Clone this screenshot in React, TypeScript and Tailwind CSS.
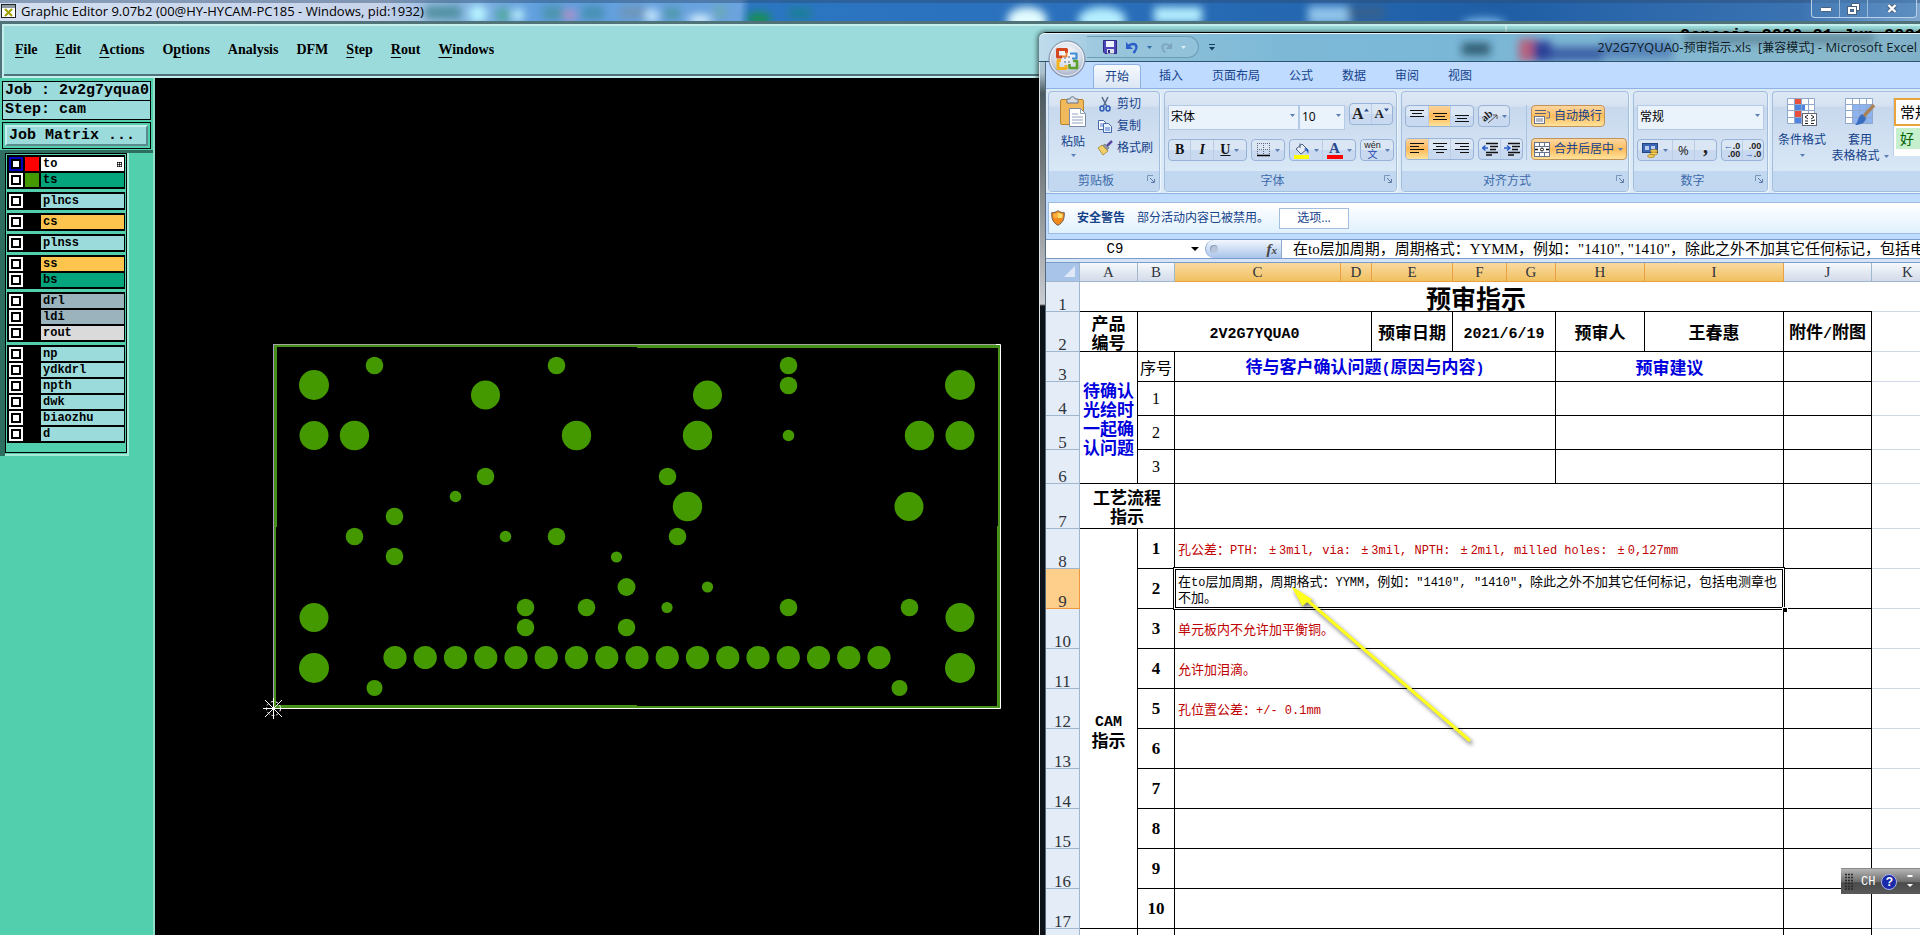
import React from 'react';
import clsx from 'clsx';

const CJK_UI = 'font-["Open_Sans","Noto_Sans_CJK_SC",sans-serif]';
const CJK_CELL = 'font-["Noto_Sans_CJK_SC",sans-serif]';
const MONO = 'font-["Liberation_Mono",monospace]';
const SERIF = 'font-["Liberation_Serif","Noto_Sans_CJK_SC",serif]';

/* ---------- Graphic Editor data ---------- */

// [before, underlined letter, after]
const menus: [string, string, string][] = [
  ['', 'F', 'ile'],
  ['', 'E', 'dit'],
  ['', 'A', 'ctions'],
  ['O', 'p', 'tions'],
  ['Analysis', '', ''],
  ['DFM', '', ''],
  ['', 'S', 'tep'],
  ['', 'R', 'out'],
  ['', 'W', 'indows'],
];

interface Layer {
  name: string;
  bg: string;
  color?: string;
  active?: boolean;
}

const layerGroups: Layer[][] = [
  [
    { name: 'to', bg: 'bg-white', color: 'bg-[#ff0000]', active: true },
    { name: 'ts', bg: 'bg-[#04a47c]', color: 'bg-[#459900]' },
  ],
  [{ name: 'plncs', bg: 'bg-[#9bdbdb]' }],
  [{ name: 'cs', bg: 'bg-[#fdc54e]' }],
  [{ name: 'plnss', bg: 'bg-[#9bdbdb]' }],
  [
    { name: 'ss', bg: 'bg-[#fdc54e]' },
    { name: 'bs', bg: 'bg-[#04a47c]' },
  ],
  [
    { name: 'drl', bg: 'bg-[#9bb3bc]' },
    { name: 'ldi', bg: 'bg-[#9bb3bc]' },
    { name: 'rout', bg: 'bg-[#dadada]' },
  ],
  [
    { name: 'np', bg: 'bg-[#9bdbdb]' },
    { name: 'ydkdrl', bg: 'bg-[#9bdbdb]' },
    { name: 'npth', bg: 'bg-[#9bdbdb]' },
    { name: 'dwk', bg: 'bg-[#9bdbdb]' },
    { name: 'biaozhu', bg: 'bg-[#9bdbdb]' },
    { name: 'd', bg: 'bg-[#9bdbdb]' },
  ],
];

// [cx, cy, r]
const pads: [number, number, number][] = [
  [314, 385, 15], [960, 385, 15], [314, 668, 15], [960, 668, 15],
  [314, 435.5, 14.5], [354.5, 435.5, 14.7], [576.5, 435.5, 14.7], [697.5, 435.5, 14.7],
  [919.5, 435.5, 14.7], [960, 435.5, 14.5], [485.5, 395, 14.5], [707.5, 395, 14.5],
  [687.5, 506.5, 14.7], [909, 506.5, 14.5], [314, 617.5, 14.5], [960, 617.5, 14.5],
  [374.5, 365.5, 8.8], [556.5, 365.5, 8.8], [788.5, 365.5, 8.8], [788.5, 385.5, 8.8],
  [485.5, 476.5, 8.8], [667.5, 476.5, 8.8], [394.5, 516.5, 8.8], [354.5, 536.5, 8.8],
  [394.5, 556.5, 8.8], [556.5, 536.5, 8.8], [677.5, 536.5, 8.8], [626.5, 587, 9],
  [525.5, 607.5, 8.8], [586.5, 607.5, 8.8], [788.5, 607.5, 8.8], [909.5, 607.5, 8.8],
  [525.5, 627.5, 8.8], [626.5, 627.5, 8.8], [374.5, 688, 8], [899.5, 688, 8],
  [455.5, 496.5, 5.8], [505.5, 536.5, 5.8], [616.5, 557, 5.6], [788.5, 435.5, 5.8],
  [707.5, 587, 5.6], [667, 607.5, 5.6],
];

const pins = Array.from({ length: 17 }, (_, i) => 395 + i * 30.25);

/* ---------- Shared bits ---------- */

const Caret = ({ className = 'text-[#5a7fb5]' }: { className?: string }) => (
  <svg width="5" height="3" viewBox="0 0 5 3" className={clsx('shrink-0', className)}>
    <path d="M0 0h5L2.5 3z" fill="currentColor" />
  </svg>
);

// Half-width runs get their own face and size, next to full-width Chinese
const Mixed = ({ text, latin, face = MONO }: { text: string; latin: string; face?: string }) => (
  <>
    {text.split(/([\x20-\x7e]+|±)/).map((run, i) => {
      if (i % 2 === 0) return run;
      return (
        <span key={i} className={clsx(face, latin, run === '±' && 'inline-block w-[13px] text-center')}>
          {run}
        </span>
      );
    })}
  </>
);

/* ---------- Graphic Editor ---------- */

const EditorTitle = () => (
  <header className="relative flex h-[21px] shrink-0 items-center overflow-hidden bg-[linear-gradient(90deg,#d3dff0_0px,#c6d3ea_380px,#8db8e2_450px,#5f9ede_540px,#6ba3de_740px,#2c76c2_750px,#2a6fbb_1100px,#1f5ea5_1500px,#3b73b2_1800px,#7ca6cf_1920px)]">
    <svg className="absolute left-0 top-0 h-full w-full" aria-hidden="true">
      <defs>
        <filter id="soft" x="-50%" y="-100%" width="200%" height="300%">
          <feGaussianBlur stdDeviation="4" />
        </filter>
      </defs>
      <g filter="url(#soft)">
        <rect x="425" y="6" width="36" height="13" fill="#4f8fa0" />
        <circle cx="478" cy="14" r="9" fill="#b5f4ff" />
        <circle cx="503" cy="15" r="7" fill="#4fa89b" />
        <circle cx="518" cy="15" r="6" fill="#bff6ff" />
        <rect x="543" y="6" width="20" height="14" fill="#4b94ae" />
        <circle cx="570" cy="15" r="6" fill="#b88fc4" />
        <rect x="582" y="6" width="22" height="14" fill="#4690b3" />
        <rect x="620" y="6" width="26" height="13" fill="#6d96bb" />
        <circle cx="652" cy="16" r="7" fill="#c6e6ff" />
        <rect x="664" y="8" width="16" height="11" fill="#4d98a8" />
        <ellipse cx="700" cy="20" rx="12" ry="5" fill="#ddf4ff" />
        <rect x="714" y="6" width="12" height="12" fill="#69a9b5" />
        <ellipse cx="759" cy="19" rx="12" ry="7" fill="#148f52" />
        <rect x="789" y="8" width="22" height="11" fill="#1d7f96" />
        <ellipse cx="1027" cy="20" rx="20" ry="13" fill="#e2fcff" />
        <ellipse cx="1102" cy="20" rx="24" ry="13" fill="#b3edff" />
        <rect x="1154" y="7" width="48" height="16" fill="#b3edff" />
        <rect x="1308" y="6" width="42" height="18" fill="#8fc3ea" />
        <rect x="1348" y="6" width="36" height="13" fill="#35618f" />
        <ellipse cx="1484" cy="24" rx="22" ry="6" fill="#7fbdec" />
      </g>
      <rect width="100%" height="3" fill="#2d4b70" opacity="0.45" />
    </svg>
    <svg width="15" height="14" viewBox="0 0 15 14" className="relative ml-px shrink-0">
      <rect x="0.5" y="0.5" width="14" height="13" fill="#fff" stroke="#222" />
      <rect x="1" y="1" width="13" height="3" fill="#8d98a5" />
      <path d="M4 5l7 7M11 5l-7 7" stroke="#a0a000" strokeWidth="2" />
    </svg>
    <h1 className={clsx('relative ml-[5px] whitespace-nowrap text-[13px] leading-5 text-black', CJK_UI)}>
      Graphic Editor 9.07b2 (00@HY-HYCAM-PC185 - Windows, pid:1932)
    </h1>
    <div className="absolute right-[3px] top-0 flex h-[18px] overflow-hidden rounded-b border border-t-0 border-[#b9d0e8] bg-[#4a7fb8]/60">
      <button aria-label="Minimize" className="flex w-7 items-center justify-center border-r border-[#9dbbd9]">
        <svg width="12" height="6" viewBox="0 0 12 6"><rect x="0.5" y="1.5" width="11" height="4" rx="1" fill="#fff" stroke="#48607c" /></svg>
      </button>
      <button aria-label="Restore" className="flex w-7 items-center justify-center border-r border-[#9dbbd9]">
        <svg width="13" height="12" viewBox="0 0 13 12">
          <path d="M4.5 3.5v-3h8v7h-3" fill="#fff" stroke="#48607c" />
          <rect x="0.5" y="3.5" width="9" height="8" fill="#fff" stroke="#48607c" />
          <rect x="3.5" y="6.5" width="3" height="2" fill="#4a7fb8" stroke="#48607c" />
        </svg>
      </button>
      <button aria-label="Close" className="flex w-12 items-center justify-center">
        <svg width="12" height="11" viewBox="0 0 12 11">
          <path d="M2.5 2l7 7M9.5 2l-7 7" stroke="#48607c" strokeWidth="4" />
          <path d="M2.5 2l7 7M9.5 2l-7 7" stroke="#fff" strokeWidth="2.4" />
        </svg>
      </button>
    </div>
  </header>
);

const EditorMenu = () => (
  <div className="flex h-[57px] shrink-0 border-t-[3px] border-[#4f7378] bg-[#4f7378] pl-0.5">
    <nav className="flex flex-1 items-center gap-[18px] overflow-hidden border-y-2 border-l-2 border-[#c4efed] bg-[#9bdbdb] pb-0.5 pl-[11px] shadow-[inset_0_-2px_0_#4f7378]">
      {menus.map(([pre, key, post]) => (
        <button key={pre + key + post} className={clsx('text-[14px] font-bold leading-5 text-black', SERIF)}>
          {pre}
          {key && <span className="underline underline-offset-[3px]">{key}</span>}
          {post}
        </button>
      ))}
    </nav>
    <div className="w-[415px] shrink-0 overflow-hidden border-l-2 border-t-2 border-[#c4efed] bg-[#9bdbdb] pl-[173px]">
      <p className={clsx('whitespace-nowrap text-[17px] font-bold leading-5 text-black', MONO)}>Genesis 2000 21 Jun 2021</p>
    </div>
  </div>
);

const LayerRow = ({ layer }: { layer: Layer }) => (
  <div className="flex h-4 items-center gap-0.5 pl-0.5 pr-px">
    <input
      type="checkbox"
      id={`layer-${layer.name}`}
      className={clsx(
        'm-0 h-[14px] w-[14px] shrink-0 appearance-none border-2 bg-white shadow-[inset_0_0_0_2px_#000]',
        layer.active ? 'border-[#0000b8]' : 'border-white'
      )}
    />
    <span className={clsx('h-[14px] w-[14px] shrink-0', layer.color)} />
    <label
      htmlFor={`layer-${layer.name}`}
      className={clsx('flex h-[14px] flex-1 items-center justify-between pl-0.5 pr-0.5 text-[12px] font-bold leading-[14px] text-black', MONO, layer.bg)}
    >
      {layer.name}
      {layer.active && (
        <svg width="5" height="5" viewBox="0 0 5 5">
          <path d="M0 .5h5M0 2.5h5M0 4.5h5M.5 0v5M2.5 0v5M4.5 0v5" stroke="#000" strokeWidth="0.7" />
        </svg>
      )}
    </label>
  </div>
);

const LayerPanel = () => (
  <aside className="flex w-[155px] shrink-0 flex-col border-r-2 border-[#8fe0c8] bg-[#52d0ae] pt-[3px]">
    <div className="px-0.5">
      <div className={clsx('whitespace-nowrap border border-black bg-[#9bdbdb] text-[15px] font-bold leading-[18px] text-black', MONO)}>
        <p className="border-b border-black pl-0.5">Job : 2v2g7yqua0</p>
        <p className="pl-0.5">Step: cam</p>
      </div>
      <div className="mt-0.5 border border-black p-0.5">
        <button className={clsx('block h-[21px] w-full border-2 border-b-[#5a8a8e] border-l-[#c4efed] border-r-[#5a8a8e] border-t-[#c4efed] bg-[#9bdbdb] pl-0.5 text-left text-[15px] font-bold leading-[17px] text-black', MONO)}>
          Job Matrix ...
        </button>
      </div>
    </div>
    <div className="mt-px border-l-[5px] border-t-[3px] border-[#2e6e60]">
      <div className="mr-6 border-b-2 border-r-2 border-[#a5ead6] pb-px">
        <div className="border border-black p-px pb-[9px]">
          <div className="flex flex-col gap-[3px]">
            {layerGroups.map((group) => (
              <div key={group[0].name} className="bg-black py-px">
                {group.map((layer) => (
                  <LayerRow key={layer.name} layer={layer} />
                ))}
              </div>
            ))}
          </div>
        </div>
      </div>
    </div>
  </aside>
);

const BoardView = () => (
  <main className="flex-1 overflow-hidden bg-black">
    <svg width="885" height="857" viewBox="155 78 885 857" className="block max-w-none">
      {/* board outline */}
      <g fill="#47901a">
        <path d="M274 345h3v182h-1v181h-2z" />
        <path d="M274 345h726v3H637v-1H274z" />
        <path d="M998 345h2v363h-3V526h1z" />
        <path d="M274 705h363v1h363v2H274z" />
      </g>
      <path d="M274 344.5h726" stroke="#a3a79c" />
      <path d="M273.5 344v364" stroke="#a896c4" />
      <path d="M996 344.5h4.5V708.5H274" fill="none" stroke="#fff" />
      <g fill="#459900">
        {pads.map(([x, y, r]) => (
          <circle key={`${x}-${y}`} cx={x} cy={y} r={r} />
        ))}
        {pins.map((x) => (
          <circle key={x} cx={x} cy={657.5} r={11.6} />
        ))}
      </g>
      {/* datum */}
      <g stroke="#fff" fill="none">
        <path d="M263 708.5h21M273.5 698v21M265 700l17 17M282 700l-17 17" />
        <circle cx="273.5" cy="708.5" r="7" strokeDasharray="3 2" />
      </g>
    </svg>
  </main>
);

/* ---------- Excel ribbon ---------- */

const OfficeLogo = () => (
  <svg width="38" height="38" viewBox="0 0 38 38">
    <defs>
      <radialGradient id="orb" cx="50%" cy="35%" r="65%">
        <stop offset="0" stopColor="#fff" />
        <stop offset="0.6" stopColor="#d5dce8" />
        <stop offset="1" stopColor="#9fabc2" />
      </radialGradient>
    </defs>
    <circle cx="19" cy="19" r="18" fill="url(#orb)" stroke="#7f8fa8" />
    <circle cx="19" cy="19" r="16.5" fill="none" stroke="#fff" opacity="0.8" />
    <g fill="none" strokeWidth="3" strokeLinejoin="round">
      <path d="M14 17H9.500V9.500h9V13" stroke="#d2451e" />
      <path d="M22 13.500h6.500V18.500H24" stroke="#3f8fd6" strokeWidth="2.200" />
      <path d="M13 20.500h-3v8h8V25" stroke="#f3b21b" />
      <path d="M25 21h4v7h-7.500v-4" stroke="#5da02c" strokeWidth="2.600" />
      <path d="M14 16.500h4.500V12" stroke="#ef7f34" strokeWidth="1.800" />
    </g>
    <path d="M16 21h2v2h-2zM20 21h2v2h-2zM20 16h2v2h-2zM16 17h2v2h-2z" fill="#9ab" />
  </svg>
);

const ExcelTitle = () => (
  <header className="relative flex h-[29px] shrink-0 items-center overflow-hidden rounded-tl-md border-b border-[#31536b] bg-[linear-gradient(90deg,#c0dcec_0px,#8fc0d8_90px,#7db9d7_240px,#7ab6d6_440px,#8ab9cc_800px,#7fb0c8_100%)] pl-12 shadow-[inset_0_1px_0_#e9f6fb]">
    <svg className="absolute left-0 top-0 h-full w-full" aria-hidden="true">
      <g filter="url(#soft)">
        <rect x="423" y="10" width="28" height="12" fill="#1d4358" opacity="0.8" />
        <rect x="480" y="6" width="18" height="22" fill="#b7607d" />
        <rect x="494" y="8" width="18" height="20" fill="#2a3f97" />
        <rect x="510" y="14" width="54" height="14" fill="#2a4a9b" opacity="0.8" />
        <rect x="562" y="8" width="72" height="18" fill="#3b66ac" opacity="0.6" />
        <rect x="645" y="2" width="190" height="8" fill="#3a5f70" opacity="0.6" />
      </g>
    </svg>
    <div className="relative flex h-[22px] items-center gap-2 rounded-r-full border border-l-0 border-[#6f9cb5] bg-[#9cc8de]/50 pl-4 pr-3">
      <button aria-label="保存">
        <svg width="14" height="14" viewBox="0 0 14 14">
          <path d="M.5.500h13v13H2l-1.500-1.500z" fill="#4a46b8" stroke="#2d2a80" />
          <rect x="3" y="1" width="8" height="6" fill="#eef2fb" />
          <rect x="4" y="9" width="7" height="4.500" fill="#dfe3ee" />
          <rect x="5" y="10" width="2" height="3" fill="#2d2a80" />
        </svg>
      </button>
      <button aria-label="撤消" className="flex items-center gap-2">
        <svg width="14" height="13" viewBox="0 0 14 13">
          <path d="M3 5.500C6 2 11 2 11.500 6c.3 2.500-1.500 4-3 6" fill="none" stroke="#2c5fc9" strokeWidth="2.400" />
          <path d="M1 1v7h7z" fill="#2c5fc9" />
        </svg>
        <Caret className="text-[#2f6ba5]" />
      </button>
      <button aria-label="恢复" className="flex items-center gap-2" disabled>
        <svg width="13" height="13" viewBox="0 0 14 13">
          <path d="M11 5.500C8 2 3 2 2.500 6 2.200 8.500 4 10 5.500 12" fill="none" stroke="#7da5bd" strokeWidth="2" />
          <path d="M13 1v7H6z" fill="#7da5bd" />
        </svg>
        <Caret className="text-[#d8ecf5]" />
      </button>
    </div>
    <button aria-label="自定义快速访问工具栏" className="relative ml-2.5">
      <svg width="6" height="7" viewBox="0 0 6 7"><path d="M0 .500h6" stroke="#14405f" /><path d="M0 3h6L3 6.500z" fill="#14405f" /></svg>
    </button>
    <h2 className="relative ml-auto whitespace-pre pr-[3px] text-[12px] leading-5 text-[#0d1b26]">
      <Mixed text="2V2G7YQUA0-预审指示.xls  [兼容模式] - Microsoft Excel" face={CJK_UI} latin="text-[13px]" />
    </h2>
  </header>
);

const tabs = ['开始', '插入', '页面布局', '公式', '数据', '审阅', '视图'];

const RibbonTabs = () => (
  <nav className="flex h-[26px] shrink-0 items-end gap-[7px] bg-[#bfdbff] pl-[47px]">
    {tabs.map((tab, i) => (
      <button
        key={tab}
        className={clsx(
          'h-6 px-[11px] text-[12px] leading-6 text-[#15428b]',
          i === 0 && 'rounded-t border border-b-0 border-[#8db2e3] bg-gradient-to-b from-[#f6fafe] to-[#dbe6f4]'
        )}
      >
        {tab}
      </button>
    ))}
  </nav>
);

interface GroupProps {
  title: string;
  className: string;
  launcher?: boolean;
  children: React.ReactNode;
}

const RibbonGroup: React.FC<GroupProps> = ({ title, className, launcher = true, children }) => (
  <section className={clsx('flex h-[101px] flex-col overflow-hidden rounded border border-[#a3bddd] bg-[linear-gradient(180deg,#dde8f5_0px,#d6e2f1_14px,#c8d8ed_15px,#d9e8f6_80px)] shadow-[1px_1px_0_#eef6fd]', className)}>
    <div className="flex-1">{children}</div>
    <div className="relative flex h-5 items-center justify-center bg-[#c1d8f0] pr-4 text-[12px] leading-5 text-[#3e6aaa]">
      {title}
      {launcher && (
        <button aria-label={`${title}选项`} className="absolute right-1 top-1">
          <svg width="8" height="8" viewBox="0 0 8 8">
            <path d="M.5 6V.500H6" fill="none" stroke="#7a96bd" />
            <path d="M3 3l4 4M7.500 4v3.500H4" fill="none" stroke="#5d7ca8" />
          </svg>
        </button>
      )}
    </div>
  </section>
);

const BtnBar = ({ children, className }: { children: React.ReactNode; className?: string }) => (
  <div className={clsx('flex h-[22px] shrink-0 divide-x divide-[#b9cde6] overflow-hidden rounded-sm border border-[#97b3d8] bg-[linear-gradient(180deg,#dbe6f4_50%,#c9d9ef_50%)]', className)}>
    {children}
  </div>
);

const Btn = ({ label, on, children, className }: { label: string; on?: boolean; children: React.ReactNode; className?: string }) => (
  <button
    aria-label={label}
    className={clsx('flex flex-1 items-center justify-center gap-1', on && 'bg-gradient-to-b from-[#fbd39a] via-[#fdb855] to-[#fee39a]', className)}
  >
    {children}
  </button>
);

const Lines = ({ rows }: { rows: [number, number, number][] }) => (
  <svg width="16" height="14" viewBox="0 0 16 14">
    {rows.map(([x, y, w], i) => (
      <path key={i} d={`M${x} ${y + 0.5}h${w}`} stroke="#111" strokeWidth="1.2" />
    ))}
  </svg>
);

const Combo = ({ label, value, className }: { label: string; value: string; className: string }) => (
  <div className={clsx('relative h-[25px] shrink-0', className)}>
    <select aria-label={label} defaultValue={value} className="h-full w-full appearance-none border border-[#b3cae8] bg-[#eaf2fb] pl-0.5 text-[12px] leading-5 text-black">
      <option>{value}</option>
    </select>
    <span className="pointer-events-none absolute right-1 top-[11px]"><Caret /></span>
  </div>
);

const ClipboardGroup = () => (
  <RibbonGroup title="剪贴板" className="w-28">
    <div className="flex gap-2 pl-2 pt-1 text-[12px] leading-4 text-[#15428b]">
      <button className="flex w-8 flex-col items-center">
        <svg width="28" height="32" viewBox="0 0 28 32">
          <rect x="1.500" y="3.500" width="23" height="25" rx="1.500" fill="#f0b95c" stroke="#b98430" />
          <path d="M8 3h3c0-3 5-3 5 0h3v4H8z" fill="#d6dbe3" stroke="#6d7684" />
          <path d="M10.500 12.500h11l5 5v13h-16z" fill="#fff" stroke="#7a8ba5" />
          <path d="M21.500 12.500v5h5M13 18h6M13 21h11M13 24h11M13 27h11" fill="none" stroke="#8fa3bf" />
        </svg>
        <span className="mt-1.5 whitespace-nowrap">粘贴</span>
        <span className="mt-1"><Caret /></span>
      </button>
      <div className="flex flex-col gap-1.5 whitespace-nowrap">
        <button className="flex items-center gap-1">
          <svg width="16" height="16" viewBox="0 0 16 16">
            <path d="M5 1l4.500 9M11 1L6.500 10" stroke="#5c6f90" strokeWidth="1.600" />
            <ellipse cx="5" cy="12.500" rx="2" ry="2.500" fill="none" stroke="#2e5cb8" strokeWidth="1.500" />
            <ellipse cx="11" cy="12.500" rx="2" ry="2.500" fill="none" stroke="#2e5cb8" strokeWidth="1.500" />
          </svg>
          剪切
        </button>
        <button className="flex items-center gap-1">
          <svg width="16" height="16" viewBox="0 0 16 16">
            <path d="M1.500 2.500h5l3 3v6h-8z" fill="#fff" stroke="#4768a8" />
            <path d="M6.500 5.500h5l3 3v6h-8z" fill="#e6effc" stroke="#4768a8" />
            <path d="M8 10h5M8 12h5M3 6h3M3 8h3" stroke="#4b7ad0" />
          </svg>
          复制
        </button>
        <button className="flex items-center gap-1">
          <svg width="16" height="16" viewBox="0 0 16 16">
            <path d="M15 1l-5 5" stroke="#5a4aa0" strokeWidth="2.500" />
            <path d="M8 4l4 4-2 2-5-4z" fill="#8d96ab" stroke="#555" strokeWidth="0.500" />
            <path d="M5 5l6 6-5 4-5-7z" fill="#f2d069" stroke="#9a7a22" strokeWidth="0.700" />
          </svg>
          格式刷
        </button>
      </div>
    </div>
  </RibbonGroup>
);

const FontGroup = () => (
  <RibbonGroup title="字体" className="w-[233px]">
    <div className="flex flex-col gap-[11px] px-[3px] pt-[11px]">
      <div className="flex">
        <Combo label="字体" value="宋体" className="w-[131px]" />
        <Combo label="字号" value="10" className="w-[46px]" />
        <BtnBar className="ml-1 flex-1">
          <Btn label="增大字号" className={SERIF}>
            <span className="flex text-[16px] font-bold leading-5 text-[#222]">A<svg width="5" height="4" viewBox="0 0 5 3" className="mt-1"><path d="M0 3h5L2.500 0z" fill="#2c4f94" /></svg></span>
          </Btn>
          <Btn label="减小字号" className={SERIF}>
            <span className="flex text-[13px] font-bold leading-5 text-[#222]">A<svg width="5" height="4" viewBox="0 0 5 3" className="mt-1"><path d="M0 0h5L2.500 3z" fill="#2c4f94" /></svg></span>
          </Btn>
        </BtnBar>
      </div>
      <div className={clsx('flex gap-1 text-[14px] leading-5 text-[#111]', SERIF)}>
        <BtnBar className="w-[79px]">
          <Btn label="加粗"><b>B</b></Btn>
          <Btn label="倾斜"><b><i>I</i></b></Btn>
          <Btn label="下划线" className="flex-[1.5]"><b className="underline">U</b><Caret /></Btn>
        </BtnBar>
        <BtnBar className="w-[34px]">
          <Btn label="边框">
            <svg width="14" height="14" viewBox="0 0 14 14">
              <path d="M.5 0v12M6.500 0v12M12.500 0v12M0 .500h13M0 6.500h13" stroke="#667" strokeDasharray="1 1" />
              <path d="M0 12.500h13" stroke="#000" strokeWidth="1.500" />
            </svg>
            <Caret />
          </Btn>
        </BtnBar>
        <BtnBar className="w-[67px]">
          <Btn label="填充颜色">
            <svg width="17" height="17" viewBox="0 0 17 17">
              <path d="M3 7l6-5 5 5-6 5z" fill="#e8eef8" stroke="#4a5c80" />
              <path d="M7 6V1.500" stroke="#4a5c80" />
              <path d="M13 6c3 1 3 3 2 6-1-3-2-4-4-5z" fill="#2c62b8" />
              <rect x="1" y="13" width="15" height="4" fill="#ffff00" />
            </svg>
            <Caret />
          </Btn>
          <Btn label="字体颜色">
            <span className="flex flex-col items-center text-[15px] font-bold leading-[14px] text-[#2a4a8c]">A<span className="h-1 w-4 bg-[#ff0000]" /></span>
            <Caret />
          </Btn>
        </BtnBar>
        <BtnBar className="w-[34px]">
          <Btn label="拼音">
            <span className="flex flex-col items-center text-[#222]">
              <span className="font-['Liberation_Sans',sans-serif] text-[9px] leading-[10px]">wén</span>
              <span className="text-[10px] leading-[10px] text-[#2747b0]">文</span>
            </span>
            <Caret />
          </Btn>
        </BtnBar>
      </div>
    </div>
  </RibbonGroup>
);

const Indent = ({ flip }: { flip?: boolean }) => (
  <svg width="16" height="14" viewBox="0 0 16 14">
    <path d="M4 1.500h12M8 4.500h8M8 7.500h6M4 10.500h12M4 13h6" stroke="#111" strokeWidth="1.400" />
    <path d={flip ? 'M0 6h5M3 3.500L6 6 3 8.500' : 'M6 6H1M3.500 3.500L.500 6l3 2.500'} fill="none" stroke="#2c5fc9" strokeWidth="1.500" />
  </svg>
);

const ORANGE = 'flex h-[22px] items-center rounded-sm border border-[#c0935a] bg-gradient-to-b from-[#fcd69f] via-[#fdbd5c] to-[#fee29a] text-[12px] leading-5 text-[#15428b]';

const AlignGroup = () => (
  <RibbonGroup title="对齐方式" className="w-[228px]">
    <div className="flex px-[3px] pt-[13px]">
      <div className="flex flex-col gap-[11px]">
        <div className="flex gap-1">
          <BtnBar className="w-[69px]">
            <Btn label="顶端对齐"><Lines rows={[[1, 1, 14], [3, 4, 10], [1, 7, 14]]} /></Btn>
            <Btn label="垂直居中" on><Lines rows={[[1, 4, 14], [3, 7, 10], [1, 10, 14]]} /></Btn>
            <Btn label="底端对齐"><Lines rows={[[1, 6, 14], [3, 9, 10], [1, 12, 14]]} /></Btn>
          </BtnBar>
          <BtnBar className="w-8">
            <Btn label="方向">
              <svg width="16" height="16" viewBox="0 0 16 16" className="overflow-visible">
                <text x="1" y="12" fontSize="11" fontWeight="bold" fontFamily="Liberation Serif" transform="rotate(-40 5 11)" fill="#222">ab</text>
                <path d="M6 15l9-8M15 11V7h-4" fill="none" stroke="#555" />
              </svg>
              <Caret />
            </Btn>
          </BtnBar>
        </div>
        <div className="flex gap-1">
          <BtnBar className="w-[69px]">
            <Btn label="左对齐" on><Lines rows={[[1, 1, 14], [1, 4, 9], [1, 7, 14], [1, 10, 9]]} /></Btn>
            <Btn label="居中"><Lines rows={[[1, 1, 14], [4, 4, 8], [1, 7, 14], [4, 10, 8]]} /></Btn>
            <Btn label="右对齐"><Lines rows={[[1, 1, 14], [6, 4, 9], [1, 7, 14], [6, 10, 9]]} /></Btn>
          </BtnBar>
          <BtnBar className="w-[45px]">
            <Btn label="减少缩进量"><Indent /></Btn>
            <Btn label="增加缩进量"><Indent flip /></Btn>
          </BtnBar>
        </div>
      </div>
      <div className="ml-[3px] flex flex-col items-start gap-[11px] whitespace-nowrap border-l border-[#a9c3e2] pl-1">
        <button className={clsx(ORANGE, 'w-[74px] gap-1 pl-0.5')}>
          <svg width="16" height="15" viewBox="0 0 16 15" className="shrink-0">
            <path d="M1 1.500h11M1 4.500h11" stroke="#555f75" />
            <rect x="0.500" y="7.500" width="10" height="7" fill="#fff" stroke="#66738c" />
            <path d="M2 10h7M2 12h7M13 3h2.500v6H12" fill="none" stroke="#66738c" />
          </svg>
          自动换行
        </button>
        <button className={clsx(ORANGE, 'w-24 gap-1 pl-0.5')}>
          <svg width="16" height="15" viewBox="0 0 16 15" className="shrink-0">
            <rect x="0.500" y="0.500" width="15" height="14" fill="#fff" stroke="#66738c" />
            <path d="M5.500 0v4M10.500 0v4M5.500 11v4M10.500 11v4M0 4.500h16M0 10.500h16" stroke="#66738c" />
            <path d="M1 7.500h3M12 7.500h3" stroke="#111" strokeWidth="1.500" />
            <circle cx="8" cy="7.500" r="1.500" fill="none" stroke="#111" />
          </svg>
          合并后居中
          <Caret />
        </button>
      </div>
    </div>
  </RibbonGroup>
);

const NumberGroup = () => (
  <RibbonGroup title="数字" className="w-[135px]">
    <div className="flex flex-col gap-[11px] px-[3px] pt-[11px]">
      <Combo label="数字格式" value="常规" className="w-full" />
      <div className="flex gap-1">
        <BtnBar className="w-20">
          <Btn label="会计数字格式" className="flex-[1.6]">
            <svg width="17" height="16" viewBox="0 0 17 16">
              <rect x="0.500" y="1.500" width="15" height="9" fill="#3c66b4" stroke="#234583" />
              <path d="M3 4h4v4H3zM9 4h4v3H9z" fill="#b9cdf0" />
              <ellipse cx="12" cy="9" rx="3.500" ry="1.500" fill="#f6d35a" stroke="#a37a14" strokeWidth="0.700" />
              <ellipse cx="12" cy="11.500" rx="3.500" ry="1.500" fill="#f6d35a" stroke="#a37a14" strokeWidth="0.700" />
              <ellipse cx="9" cy="14" rx="3.500" ry="1.500" fill="#f6d35a" stroke="#a37a14" strokeWidth="0.700" />
            </svg>
            <Caret />
          </Btn>
          <Btn label="百分比样式"><span className="text-[13px] leading-5 text-[#222]">%</span></Btn>
          <Btn label="千位分隔样式"><b className={clsx('h-5 text-[20px] leading-3 text-[#222]', SERIF)}>,</b></Btn>
        </BtnBar>
        <BtnBar className="flex-1 font-['Liberation_Sans',sans-serif] text-[9px] font-bold leading-[8px] text-[#222]">
          <Btn label="增加小数位数">
            <span className="flex flex-col items-end"><span><span className="text-[#2c5fc9]">←</span>.0</span><span>.00</span></span>
          </Btn>
          <Btn label="减少小数位数">
            <span className="flex flex-col items-end"><span>.00</span><span><span className="text-[#2c5fc9]">→</span>.0</span></span>
          </Btn>
        </BtnBar>
      </div>
    </div>
  </RibbonGroup>
);

const GridIcon = ({ brush }: { brush?: boolean }) => (
  <svg width="31" height="29" viewBox="0 0 31 29">
    <rect x="0.500" y="0.500" width="27" height="25" fill="#fff" />
    {brush ? (
      <rect x="7" y="7" width="21" height="19" fill="#8db4f0" />
    ) : (
      <>
        <path d="M7 0h7v7H7zM7 13h7v6H7z" fill="#e8503c" />
        <path d="M7 7h11v6H7zM7 19h9v7H7z" fill="#4f83e0" />
      </>
    )}
    <path d="M.5.500h27v25H.5zM7.500 0v26M14.500 0v26M21.500 0v26M0 6.500h28M0 12.500h28M0 19.500h28" fill="none" stroke="#8fa8cc" />
    {brush ? (
      <>
        <path d="M29 7L18 19" stroke="#a9825a" strokeWidth="3.500" />
        <path d="M17 16l4 4c-1 5-5 7-11 7 3-2 3-9 7-11z" fill="#3a6fc0" />
      </>
    ) : (
      <>
        <rect x="15.500" y="15.500" width="14" height="12" fill="#fff" stroke="#667" />
        <path d="M21 17l-3 2 3 2M18 23h3M24 17l3 2-3 2M24 23l4-1M18 25.500h3M24 25.500h3" fill="none" stroke="#222" />
      </>
    )}
  </svg>
);

const StyleGroup = () => (
  <RibbonGroup title="" launcher={false} className="min-w-0 flex-1 rounded-r-none border-r-0">
    <div className="flex pl-1 pt-[6px] text-[12px] leading-4 text-[#15428b]">
      <button className="flex w-[50px] flex-col items-center whitespace-nowrap">
        <GridIcon />
        <span className="mt-[5px]">条件格式</span>
        <span className="mt-1.5"><Caret /></span>
      </button>
      <button className="ml-0.5 flex w-[62px] flex-col items-center whitespace-nowrap">
        <GridIcon brush />
        <span className="mt-[5px]">套用</span>
        <span className="flex items-center gap-1">表格格式<Caret /></span>
      </button>
      <div className="ml-0.5 h-[58px] flex-1 overflow-hidden border-l border-[#b9cfe9] bg-white">
        <button className="block h-7 w-20 border-2 border-[#e9a53c] pl-1 text-left text-[15px] leading-6 text-black">常规</button>
        <button className="ml-0.5 mt-0.5 block h-[21px] w-20 bg-[#c6efce] pl-1 text-left text-[14px] leading-5 text-[#006100]">好</button>
      </div>
    </div>
  </RibbonGroup>
);

const SecurityBar = () => (
  <div className="ml-0.5 flex h-8 shrink-0 items-center border border-r-0 border-[#9dbce0] bg-gradient-to-b from-white to-[#e0f1fd] pl-0.5 text-[12px] leading-5 text-[#15428b]">
    <svg width="14" height="16" viewBox="0 0 14 16">
      <path d="M7 .700c2 1.500 4 2 6.300 2 0 5.500-.6 9.500-6.300 12.600C1.300 12.200.7 8.200.7 2.700 3 2.700 5 2.200 7 .700z" fill="#f58a1c" stroke="#6b5a4a" />
      <path d="M7 2.500c1.500 1 3 1.400 4.500 1.500 0 2 0 3-.4 4H7z" fill="#fde06b" />
      <path d="M7 2.500C5.500 3.500 4 3.900 2.500 4c0 2 0 3 .4 4H7z" fill="#fbb040" />
    </svg>
    <b className="ml-3">安全警告</b>
    <span className="ml-3">部分活动内容已被禁用。</span>
    <button className="ml-[10px] h-[21px] w-[70px] border border-[#a3bede] bg-white leading-[18px]">选项...</button>
  </div>
);

const FormulaBar = () => (
  <div className="flex h-5 shrink-0 border-y border-[#7b9cc8] bg-white">
    <input aria-label="名称框" defaultValue="C9" className={clsx('w-[138px] bg-transparent text-center text-[14px] leading-4 text-black outline-none', MONO)} />
    <button aria-label="名称列表" className="flex w-[21px] items-center justify-center"><svg width="8" height="4" viewBox="0 0 8 4"><path d="M0 0h8L4 4z" fill="#000" /></svg></button>
    <div className="flex w-[77px] items-center justify-between rounded-l-full border-l border-r border-[#8faad0] bg-gradient-to-b from-[#f2f7fd] to-[#a9c4ea] pl-1 pr-1">
      <span className="h-2 w-2 rounded-full bg-[#b8c6dc] shadow-[inset_1px_1px_1px_#8fa0bb]" />
      <button aria-label="插入函数" className={clsx('text-[15px] font-bold italic leading-4 text-[#444]', SERIF)}>f<span className="text-[11px]">x</span></button>
    </div>
    <input
      aria-label="编辑栏"
      defaultValue={'在to层加周期，周期格式：YYMM，例如："1410", "1410"，除此之外不加其它任何标记，包括电测章也不加。'}
      className={clsx('min-w-0 flex-1 bg-transparent pl-[11px] text-[15px] leading-[18px] text-black outline-none', SERIF)}
    />
  </div>
);

/* ---------- Worksheet ---------- */

const columns: [string, string, boolean][] = [
  ['A', 'w-[58px]', false],
  ['B', 'w-[37px]', false],
  ['C', 'w-[166px]', true],
  ['D', 'w-[31px]', true],
  ['E', 'w-[81px]', true],
  ['F', 'w-[54px]', true],
  ['G', 'w-[49px]', true],
  ['H', 'w-[89px]', true],
  ['I', 'w-[139px]', true],
  ['J', 'w-[88px]', false],
  ['K', 'w-[72px]', false],
];

const camNotes = [
  '孔公差：PTH: ±3mil, via: ±3mil, NPTH: ±2mil, milled holes: ±0,127mm',
  '在to层加周期，周期格式：YYMM，例如："1410", "1410"，除此之外不加其它任何标记，包括电测章也不加。',
  '单元板内不允许加平衡铜。',
  '允许加泪滴。',
  '孔位置公差：+/- 0.1mm',
  '', '', '', '', '',
];

const CELL = 'border-b border-r border-black p-0 text-center align-middle';
const HEAD = 'text-[17px] font-bold leading-[19px]';
const HEAD_LATIN = 'text-[15px] leading-none';

const RowHead = ({ n, on }: { n: number; on?: boolean }) => (
  <th
    scope="row"
    className={clsx(
      'border-b border-r p-0 text-center align-bottom text-[17px] font-normal leading-3 text-[#30343c]',
      SERIF,
      on ? 'border-[#f2963c] bg-[#fdcf8a]' : 'border-[#9eb6ce] bg-[#e4ecf7]'
    )}
  >
    {n}
  </th>
);

const Blank = () => <td className="border-b border-[#d0d7e5] p-0" />;

const Sheet = () => (
  <div className="relative min-h-0 flex-1 overflow-hidden bg-white">
    <table className={clsx('w-[898px] table-fixed border-separate border-spacing-0 text-black', CJK_CELL)}>
      <thead>
        <tr className={clsx('h-[19px]', SERIF)}>
          <th className="w-[34px] border-b border-r border-[#9eb6ce] bg-[#a9c4e9] p-0">
            <svg width="12" height="12" viewBox="0 0 12 12" className="ml-auto mr-1"><path d="M12 0v11H1z" fill="#dfe9f6" /></svg>
          </th>
          {columns.map(([name, width, on]) => (
            <th
              key={name}
              scope="col"
              className={clsx(
                width,
                'border-b border-r p-0 text-[15px] font-normal leading-[18px] text-[#30343c]',
                on ? 'border-[#e9a041] bg-gradient-to-b from-[#f9d99f] to-[#f1c15f]' : 'border-[#9eb6ce] bg-gradient-to-b from-[#f6f9fc] to-[#d3dbe9]'
              )}
            >
              {name}
            </th>
          ))}
        </tr>
      </thead>
      <tbody>
        <tr className="h-[30px]">
          <RowHead n={1} />
          <td colSpan={10} className="border-b border-black p-0 text-center text-[25px] font-bold leading-7">预审指示</td>
          <Blank />
        </tr>
        <tr className="h-10">
          <RowHead n={2} />
          <td className={clsx(CELL, HEAD)}>产品<br />编号</td>
          <td colSpan={3} className={clsx(CELL, HEAD)}><Mixed text="2V2G7YQUA0" latin={HEAD_LATIN} /></td>
          <td className={clsx(CELL, HEAD)}>预审日期</td>
          <td colSpan={2} className={clsx(CELL, HEAD)}><Mixed text="2021/6/19" latin={HEAD_LATIN} /></td>
          <td className={clsx(CELL, HEAD)}>预审人</td>
          <td className={clsx(CELL, HEAD)}>王春惠</td>
          <td className={clsx(CELL, HEAD)}><Mixed text="附件/附图" latin={HEAD_LATIN} /></td>
          <Blank />
        </tr>
        <tr className="h-[30px]">
          <RowHead n={3} />
          <td rowSpan={4} className={clsx(CELL, HEAD, 'text-[#0000dd]')}>待确认<br />光绘时<br />一起确<br />认问题</td>
          <td className={clsx(CELL, 'text-[16px] leading-5')}>序号</td>
          <td colSpan={5} className={clsx(CELL, HEAD, 'text-[#0000dd]')}><Mixed text="待与客户确认问题(原因与内容)" latin={HEAD_LATIN} /></td>
          <td colSpan={2} className={clsx(CELL, HEAD, 'text-[#0000dd]')}>预审建议</td>
          <td className={CELL} />
          <Blank />
        </tr>
        {[1, 2, 3].map((n) => (
          <tr key={n} className="h-[34px]">
            <RowHead n={n + 3} />
            <td className={clsx(CELL, SERIF, 'text-[16px] leading-5')}>{n}</td>
            <td colSpan={5} className={CELL} />
            <td colSpan={2} className={CELL} />
            <td className={CELL} />
            <Blank />
          </tr>
        ))}
        <tr className="h-[45px]">
          <RowHead n={7} />
          <td colSpan={2} className={clsx(CELL, HEAD)}>工艺流程<br />指示</td>
          <td colSpan={7} className={CELL} />
          <td className={CELL} />
          <Blank />
        </tr>
        {camNotes.map((note, i) => (
          <tr key={i} className="h-10">
            <RowHead n={i + 8} on={i === 1} />
            {i === 0 && (
              <td rowSpan={10} className={clsx(CELL, HEAD)}>
                <Mixed text="CAM" latin={HEAD_LATIN} /><br />指示
              </td>
            )}
            <td className={clsx(CELL, SERIF, 'text-[17px] font-bold leading-5')}>{i + 1}</td>
            <td
              colSpan={7}
              className={clsx(
                'relative border-b border-r border-black py-0 pl-[3px] pr-1 text-left align-middle text-[13px] leading-4',
                i === 1 ? 'text-black' : 'text-[#c00000]'
              )}
            >
              <Mixed text={note} latin="text-[12px] leading-none" />
              {i === 1 && (
                <div className="pointer-events-none absolute -inset-0.5 border border-black shadow-[inset_0_0_0_1px_#fff,inset_0_0_0_2px_#000]">
                  <span className="absolute -bottom-1 -right-1 h-[6px] w-[6px] border border-white bg-black" />
                </div>
              )}
            </td>
            <td className={CELL} />
            <Blank />
          </tr>
        ))}
        <tr className="h-10">
          <RowHead n={18} />
          <td className={CELL} />
          <td className={CELL} />
          <td colSpan={7} className={CELL} />
          <td className={CELL} />
          <Blank />
        </tr>
      </tbody>
    </table>
    {/* callout arrow */}
    <svg width="190" height="166" viewBox="0 0 190 166" className="pointer-events-none absolute left-[245px] top-[323px] drop-shadow-[2px_3px_2px_rgba(0,0,0,0.55)]">
      <path d="M16 14L178 154" stroke="#ffff1e" strokeWidth="3" strokeLinecap="round" />
      <path d="M2 2l18 11.500-3 1-5.500 4.500z" fill="#ffff1e" stroke="#ffff1e" strokeLinejoin="round" strokeWidth="1.500" />
    </svg>
  </div>
);

const ExcelWindow = () => (
  <div className={clsx('absolute bottom-0 left-[1039px] right-0 top-8 flex flex-col rounded-tl-lg border-t border-black bg-[linear-gradient(180deg,#c0dcec_0px,#a9bfcc_40px,#4c5a60_60px,#6c7274_120px,#c9ccd0_271px,#0c1218_273px)] shadow-[-2px_-1px_4px_rgba(0,0,0,0.5)]', CJK_UI)}>
    <ExcelTitle />
    <div className="absolute left-[9px] top-[7px] z-10">
      <button aria-label="Office 按钮" className="block"><OfficeLogo /></button>
    </div>
    <div className="flex min-h-0 flex-1 border-l border-[#dfe6ea] pl-[5px]">
      <div className="flex min-w-0 flex-1 flex-col border-l border-[#56697c] bg-[#bfdbff]">
        <RibbonTabs />
        <div className="flex h-[106px] shrink-0 gap-1 overflow-hidden border-y border-[#8db2e3] bg-[#dce9f7] pl-0.5 pt-0.5">
          <ClipboardGroup />
          <FontGroup />
          <AlignGroup />
          <NumberGroup />
          <StyleGroup />
        </div>
        <div className="h-2 shrink-0" />
        <SecurityBar />
        <div className="h-[5px] shrink-0" />
        <FormulaBar />
        <div className="h-1 shrink-0 border-b border-[#7b9cc8] bg-[#d5e4f7]" />
        <Sheet />
      </div>
    </div>
  </div>
);

const LanguageBar = () => (
  <div className="absolute bottom-[41px] right-0 flex h-[26px] w-[79px] items-center border-t border-[#8a8a8a] bg-[linear-gradient(180deg,#b5b5b5,#6f6f6f_50%,#4b4b4b_55%,#5a5a5a)] pl-1">
    <svg width="8" height="17" viewBox="0 0 8 17">
      <path d="M0 1.500h8M0 4.500h8M0 7.500h8M0 10.500h8M0 13.500h8M0 16h8" stroke="#2a2a2a" strokeWidth="1.500" strokeDasharray="2 1" />
    </svg>
    <button className={clsx('ml-2 text-[12px] leading-5 text-white', MONO)}>CH</button>
    <button aria-label="帮助" className="ml-1.5 flex h-4 w-4 items-center justify-center rounded-full border border-[#aab4e8] bg-[#1a2aa8] font-['Liberation_Sans',sans-serif] text-[12px] font-bold leading-4 text-white">?</button>
    <button aria-label="选项" className="ml-2.5">
      <svg width="6" height="13" viewBox="0 0 6 13"><path d="M.500 1h5" stroke="#fff" strokeWidth="2" /><path d="M0 9h6L3 12z" fill="#fff" /></svg>
    </button>
  </div>
);

export default function App() {
  return (
    <div className="relative flex h-screen flex-col overflow-hidden bg-black">
      <EditorTitle />
      <EditorMenu />
      <div className="flex min-h-0 flex-1">
        <LayerPanel />
        <BoardView />
      </div>
      <ExcelWindow />
      <LanguageBar />
    </div>
  );
}
